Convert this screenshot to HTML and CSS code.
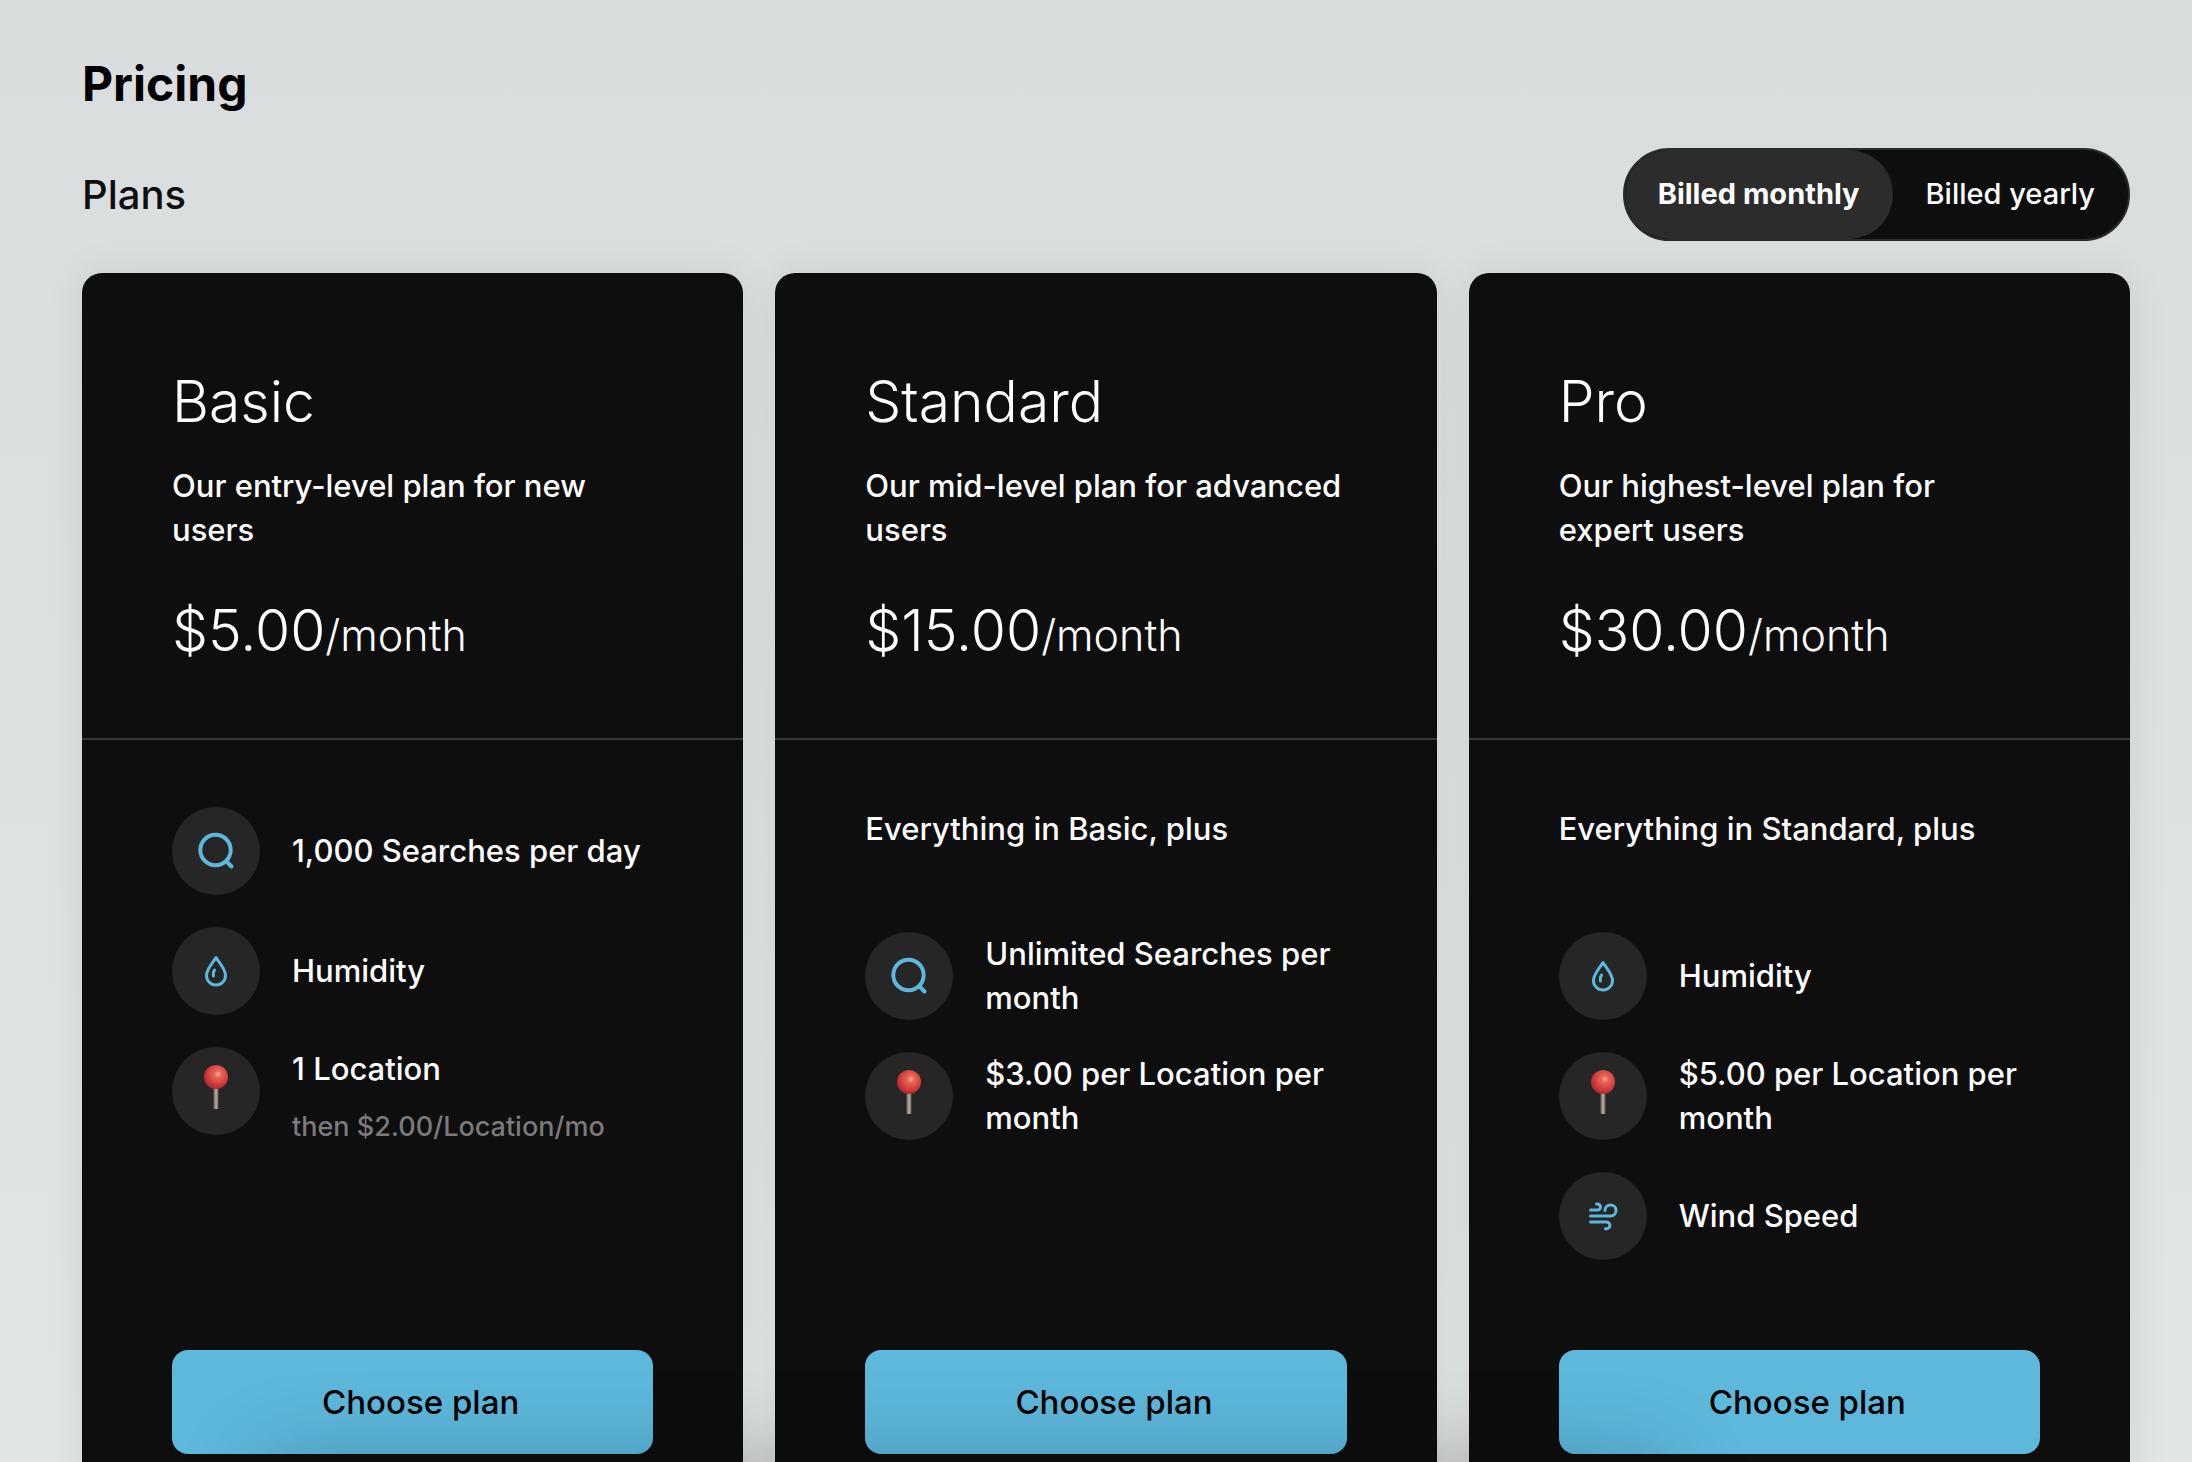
FILE: index.html
```html
<!DOCTYPE html>
<html lang="en">
<head>
<meta charset="utf-8">
<meta name="viewport" content="width=device-width, initial-scale=1">
<title>Pricing</title>
<link rel="stylesheet" href="styles.css">
</head>
<body>
<svg class="sprite" aria-hidden="true">
  <defs>
    <radialGradient id="pin-head" cx="58%" cy="38%" r="62%">
      <stop offset="0" stop-color="#ffb09c"/>
      <stop offset="0.22" stop-color="#e9685a"/>
      <stop offset="0.7" stop-color="#d23c38"/>
      <stop offset="1" stop-color="#a82a36"/>
    </radialGradient>
    <linearGradient id="pin-needle" x1="0" x2="1" y1="0" y2="0">
      <stop offset="0" stop-color="#6b625d"/>
      <stop offset="0.55" stop-color="#b9ada6"/>
      <stop offset="1" stop-color="#5e5652"/>
    </linearGradient>
  </defs>
  <symbol id="icon-search" viewBox="0 0 40 40">
    <circle cx="19.500" cy="19" r="15.200" fill="none" stroke="currentColor" stroke-width="4"/>
    <path d="M30.500 30.500 L35.500 35.500" fill="none" stroke="currentColor" stroke-width="4" stroke-linecap="round"/>
  </symbol>
  <symbol id="icon-drop" viewBox="0 0 40 40">
    <path d="M20 6.500 C18 10.500 10.500 17.500 10.500 24.500 A9.500 9.500 0 0 0 29.500 24.500 C29.500 17.500 22 10.500 20 6.500 Z" fill="none" stroke="currentColor" stroke-width="3" stroke-linejoin="round"/>
    <path d="M18.500 19 Q17 21 17.300 25" fill="none" stroke="currentColor" stroke-width="3" stroke-linecap="round"/>
  </symbol>
  <symbol id="icon-pin" viewBox="0 0 40 48">
    <rect x="17.500" y="20" width="5" height="22" rx="1" fill="url(#pin-needle)"/>
    <circle cx="20" cy="10" r="12" fill="url(#pin-head)"/>
  </symbol>
  <symbol id="icon-wind" viewBox="0 0 40 40">
    <path d="M7.500 14 H14.500 A3 3 0 0 0 14.500 8 H13.500 M7.500 20 H27.500 A5.500 5.500 0 1 0 22 14.500 M7.500 26 H23.500 A3.400 3.400 0 0 1 23.500 32.800 H22.500" fill="none" stroke="currentColor" stroke-width="3" stroke-linecap="round" stroke-linejoin="round"/>
  </symbol>
</svg>

<main class="page">
  <h1 class="page-title">Pricing</h1>
  <div class="toolbar">
    <h2 class="section-title">Plans</h2>
    <div class="billing" role="group" aria-label="Billing period">
      <button type="button" class="billing-option billing-option-active" aria-pressed="true">Billed monthly</button>
      <button type="button" class="billing-option" aria-pressed="false">Billed yearly</button>
    </div>
  </div>

  <div class="plans">
    <article class="plan">
      <header class="plan-head">
        <h3 class="plan-name">Basic</h3>
        <p class="plan-text">Our entry-level plan for new users</p>
        <p class="price">$5.00<span class="price-period">/month</span></p>
      </header>
      <div class="plan-body">
        <ul class="features">
          <li class="feature"><span class="badge"><svg class="icon"><use href="#icon-search"/></svg></span><span>1,000 Searches per day</span></li>
          <li class="feature"><span class="badge"><svg class="icon"><use href="#icon-drop"/></svg></span><span>Humidity</span></li>
          <li class="feature feature-noted"><span class="badge"><svg class="icon icon-tall"><use href="#icon-pin"/></svg></span><span>1 Location<small class="feature-note">then $2.00/Location/mo</small></span></li>
        </ul>
        <button type="button" class="choose">Choose plan</button>
      </div>
    </article>

    <article class="plan">
      <header class="plan-head">
        <h3 class="plan-name">Standard</h3>
        <p class="plan-text">Our mid-level plan for advanced users</p>
        <p class="price">$15.00<span class="price-period">/month</span></p>
      </header>
      <div class="plan-body">
        <p class="plan-includes">Everything in Basic, plus</p>
        <ul class="features">
          <li class="feature"><span class="badge"><svg class="icon"><use href="#icon-search"/></svg></span><span>Unlimited Searches per month</span></li>
          <li class="feature"><span class="badge"><svg class="icon icon-tall"><use href="#icon-pin"/></svg></span><span>$3.00 per Location per month</span></li>
        </ul>
        <button type="button" class="choose">Choose plan</button>
      </div>
    </article>

    <article class="plan">
      <header class="plan-head">
        <h3 class="plan-name">Pro</h3>
        <p class="plan-text">Our highest-level plan for expert users</p>
        <p class="price">$30.00<span class="price-period">/month</span></p>
      </header>
      <div class="plan-body">
        <p class="plan-includes">Everything in Standard, plus</p>
        <ul class="features">
          <li class="feature"><span class="badge"><svg class="icon"><use href="#icon-drop"/></svg></span><span>Humidity</span></li>
          <li class="feature"><span class="badge"><svg class="icon icon-tall"><use href="#icon-pin"/></svg></span><span>$5.00 per Location per month</span></li>
          <li class="feature"><span class="badge"><svg class="icon"><use href="#icon-wind"/></svg></span><span>Wind Speed</span></li>
        </ul>
        <button type="button" class="choose">Choose plan</button>
      </div>
    </article>
  </div>
</main>
<div class="bottom-shade"></div>
</body>
</html>
```
FILE: styles.css
```css
* {
  box-sizing: border-box;
}

html {
  height: 100%;
}

body {
  height: 100%;
  margin: 0;
  overflow: hidden;
  background: linear-gradient(#d9dddd, #e2e5e6);
  color: #000;
  font-family: Inter, "Liberation Sans", sans-serif;
  font-size: 31px;
  line-height: 44px;
}

h1, h2, h3, p, ul {
  margin: 0;
  padding: 0;
}

button {
  border: 0;
  font-family: inherit;
  cursor: pointer;
}

.sprite {
  position: absolute;
  width: 0;
  height: 0;
}

.page {
  padding: 52px 62px 0 82px;
}

.page-title {
  font-size: 48px;
  line-height: 64px;
  font-weight: 700;
}

.toolbar {
  display: flex;
  align-items: center;
  justify-content: space-between;
  margin: 32px 0;
}

.section-title {
  color: #0e0e0e;
  font-size: 40px;
  font-weight: 500;
}

.billing {
  display: flex;
  height: 93px;
  border: 2px solid #2c2c2c;
  border-radius: 48px;
  background: #0e0e0e;
  overflow: hidden;
}

.billing-option {
  padding: 0 33px 2px;
  border-radius: 48px;
  background: transparent;
  color: #fff;
  font-size: 29px;
  font-weight: 500;
}

.billing-option-active {
  background: #2c2c2c;
  font-weight: 700;
}

.plans {
  display: grid;
  grid-template-columns: repeat(3, 1fr);
  gap: 32px;
}

.plan {
  display: flex;
  flex-direction: column;
  border-radius: 20px;
  background: #0e0e0e;
  box-shadow: 0 0 40px rgba(0, 0, 0, 0.08);
  color: #fff;
  font-weight: 500;
}

.plan-head {
  padding: 91px 90px 65px;
  border-bottom: 2px solid #383838;
}

.plan-name,
.price {
  font-size: 57px;
  line-height: 76px;
  font-weight: 300;
}

.plan-text {
  max-width: 478px;
  margin: 24px 0 41px;
}

.price-period {
  font-size: 43px;
}

.plan-body {
  display: flex;
  flex: 1;
  flex-direction: column;
  padding: 67px 90px 90px;
}

.plan-includes {
  margin-bottom: 81px;
}

.features {
  display: flex;
  flex-direction: column;
  gap: 32px;
  margin-bottom: 90px;
  list-style: none;
}

.feature {
  display: flex;
  align-items: center;
  gap: 32px;
  min-height: 88px;
}

.feature-noted {
  align-items: flex-start;
}

.badge {
  display: flex;
  flex: none;
  align-items: center;
  justify-content: center;
  width: 88px;
  height: 88px;
  border-radius: 50%;
  background: #262626;
  color: #5db8dc;
}

.icon {
  width: 40px;
  height: 40px;
  overflow: visible;
}

.icon-tall {
  height: 48px;
}

#icon-pin {
  overflow: visible;
}

.feature-note {
  display: block;
  margin-top: 14px;
  color: #7a7a7a;
  font-size: 27px;
}

.choose {
  height: 104px;
  margin-top: auto;
  padding: 0 0 0 16px;
  border-radius: 16px;
  background: #5db8dc;
  color: #000;
  font-size: 33px;
  font-weight: 500;
}

/* Soft shadow rising from below the bottom edge of the window */
.bottom-shade {
  position: fixed;
  top: 100%;
  left: 12%;
  right: 24%;
  height: 100px;
  box-shadow: 0 0 90px rgba(0, 0, 0, 0.24);
  pointer-events: none;
}
```
